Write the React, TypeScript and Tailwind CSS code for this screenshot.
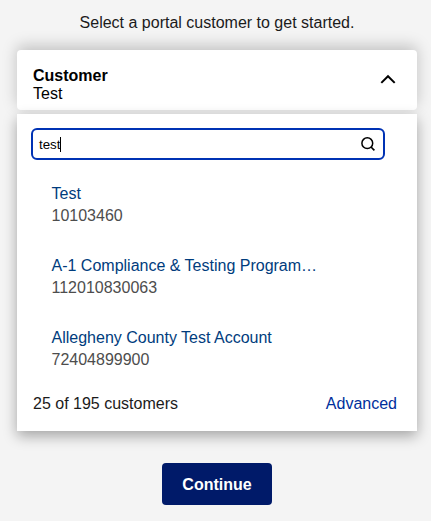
const customers = [
  { name: 'Test', id: '10103460' },
  { name: 'A-1 Compliance & Testing Program…', id: '112010830063' },
  { name: 'Allegheny County Test Account', id: '72404899900' },
];

function ChevronUp() {
  return (
    <svg className="mr-[21px] mt-[24px] h-[10px] w-4" viewBox="0 0 16 10" fill="none" stroke="#000" strokeWidth="2">
      <path d="M1.3 8.9 8 2.2l6.7 6.7" />
    </svg>
  );
}

function SearchIcon() {
  return (
    <svg className="h-4 w-4" viewBox="0 0 16 16" fill="none" stroke="#000" strokeWidth="1.5">
      <circle cx="7.3" cy="7.2" r="5.4" />
      <path d="m11 11 3.4 3.3" strokeWidth="1.7" />
    </svg>
  );
}

export default function App() {
  return (
    <main className="flex h-[521px] w-[431px] flex-col overflow-hidden bg-[#f4f4f4] pl-[17px] pr-[14px] pt-[14px] font-['Liberation_Sans',Arial,sans-serif] text-base leading-[18px] text-[#1b1b1b]">
      <p className="text-center">Select a portal customer to get started.</p>

      <button className="mt-[18px] flex h-[60px] shrink-0 items-start justify-between rounded-[4px] bg-white pl-4 text-left text-black shadow-[0_-4px_15px_rgba(0,0,0,0.21)]">
        <span className="flex flex-col pt-[17px]">
          <strong>Customer</strong>
          <span>Test</span>
        </span>
        <ChevronUp />
      </button>

      <section className="relative mt-1 flex h-[317px] shrink-0 flex-col bg-white pt-[14px] shadow-[0_5px_13px_rgba(0,0,0,0.33)]">
        <div className="ml-[14px] flex h-8 w-[354px] items-center justify-between rounded-[6px] border-2 border-[#0032b4] pl-[6px] pr-[7px]">
          <span className="flex items-center text-[13.333px] leading-[15px] text-black">
            test
            <span className="h-[15px] w-px bg-black" />
          </span>
          <SearchIcon />
        </div>

        <ul className="mt-[23px] flex flex-col gap-7 pl-[34.5px] leading-[22px]">
          {customers.map((customer) => (
            <li key={customer.id} className="flex flex-col">
              <span className="text-[#003c7d]">{customer.name}</span>
              <span className="text-[#4d4d4d]">{customer.id}</span>
            </li>
          ))}
        </ul>

        <div className="mt-6 flex justify-between pl-4 pr-5">
          <span>25 of 195 customers</span>
          <a className="text-[#002f9c]">Advanced</a>
        </div>
      </section>

      <button className="mt-8 h-[42px] w-[110px] shrink-0 self-center rounded-[4px] bg-[#001a69] pt-px font-bold text-white">
        <span className="relative top-[0.5px]">Continue</span>
      </button>
    </main>
  );
}
